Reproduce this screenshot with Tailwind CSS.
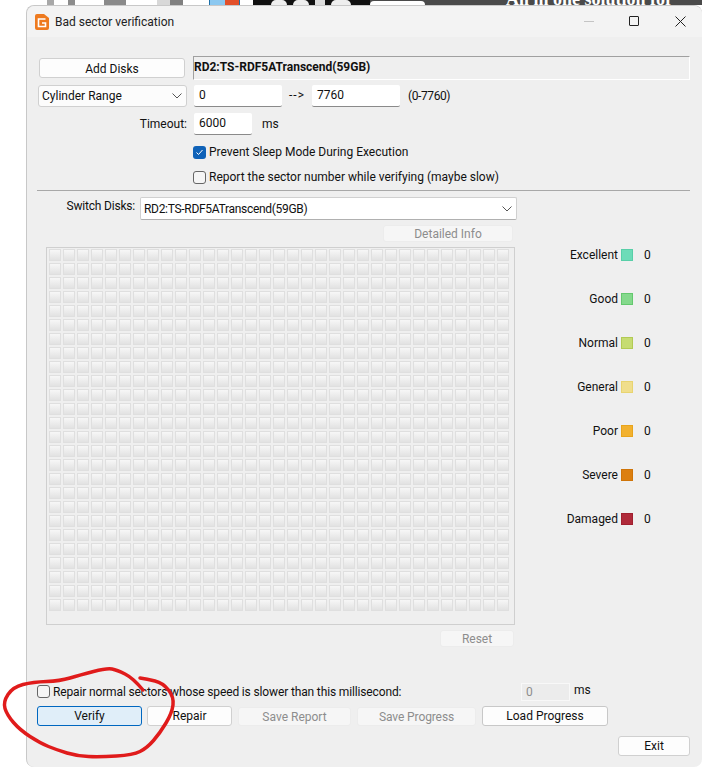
<!DOCTYPE html>
<html lang="en">
<head>
    <meta charset="UTF-8">
    <title>Bad sector verification</title>
    <script src="https://cdn.jsdelivr.net/npm/@tailwindcss/browser@4"></script>
</head>
<body class="bg-white">
<div class="relative w-[702px] h-[767px] overflow-hidden font-['Roboto',sans-serif] text-[12px] text-[#111]">

    <!-- desktop strip behind the window -->
    <div class="absolute left-0 top-0 w-[702px] h-[8px] overflow-hidden flex items-start">
        <div class="ml-[47px] w-[7px] h-[5px] bg-[#a8a8a8]"></div>
        <div class="ml-[14px] w-[7px] h-[5px] bg-[#8c8c8c]"></div>
        <div class="ml-[29px] w-[22px] h-[5px] bg-[#8a8a8a]"></div>
        <div class="ml-[31px] w-[13px] h-[5px] bg-[#d8d8d8]"></div>
        <div class="w-[13px] h-[5px] bg-[#808080]"></div>
        <div class="ml-[26px] w-[31px] h-[5px] bg-[#8cc8f0] border-x border-[#1d6fa8] flex justify-end"><div class="w-[14px] h-[5px] bg-[#e2502a]"></div></div>
        <div class="ml-[13px] w-[117px] h-[5px] bg-[#111] flex gap-[6px] pl-[18px]">
            <div class="w-[16px] h-[5px] bg-[#eee] rounded-t-full"></div>
            <div class="w-[16px] h-[5px] bg-[#eee] rounded-t-full"></div>
            <div class="w-[10px] h-[5px] bg-[#ddd]"></div>
            <div class="w-[20px] h-[5px] bg-[#eee] rounded-t-full"></div>
        </div>
        <div class="w-[332px] h-[5px] bg-[#4a4a4a] relative overflow-hidden">
            <div class="absolute left-[0px] top-[1px] w-[55px] h-[4px] bg-white rounded-t-full"></div>
            <span class="absolute left-[136px] top-[-10px] font-['Liberation_Serif',serif] font-bold text-[18px] leading-[18px] text-white whitespace-nowrap">All in one solution for</span>
        </div>
    </div>

    <!-- window -->
    <div class="absolute left-[26px] top-[5px] w-[676px] h-[762px] bg-[#efefef] rounded-[8px] border-t border-l border-[#c8c8c8]">
        <!-- title bar -->
        <div class="h-[31px] bg-[#f3f3f3] flex items-center rounded-t-[8px]">
            <svg class="ml-[8px] mt-[1px]" width="14" height="16" viewBox="0 0 14 16">
                <path d="M2 0h7l5 4v10a2 2 0 0 1-2 2H2a2 2 0 0 1-2-2V2a2 2 0 0 1 2-2z" fill="#ee7a1f"/>
                <path d="M10.500 5H3.500v7.500h7V9H7" fill="none" stroke="#fff" stroke-width="1.600"/>
            </svg>
            <span class="ml-[6px] text-[#222]">Bad sector verification</span>
            <div class="absolute left-[557px] top-[15px] w-[10px] h-[1px] bg-[#c4c4c4]"></div>
            <div class="absolute left-[602px] top-[10px] w-[10px] h-[10px] border border-[#222] rounded-[1px]"></div>
            <svg class="absolute left-[648px] top-[10px]" width="11" height="11" viewBox="0 0 11 11"><path d="M.5.500l10 10M10.500.500l-10 10" stroke="#222" fill="none"/></svg>
        </div>

        <!-- top form -->
        <div class="pl-[11px]">
            <div class="flex mt-[19px] h-[25px] items-start">
                <button class="ml-[1px] w-[146px] h-[20px] mt-[2px] pt-[1px] bg-[#fdfdfd] border border-[#d0d0d0] rounded-[3px]">Add Disks</button>
                <div class="ml-[8px] w-[497px] h-[24px] border border-[#a0a0a0] border-r-white border-b-white font-bold leading-[20px] text-[#111]">RD2:TS-RDF5ATranscend(59GB)</div>
            </div>
            <div class="flex items-center h-[22px] mt-[4px]">
                <div class="w-[149px] h-[22px] bg-[#fcfcfc] border border-[#d0d0d0] rounded-[3px] flex items-center pl-[3px] justify-between pr-[3px]">
                    <span>Cylinder Range</span>
                    <svg width="12" height="8" viewBox="0 0 12 8"><path d="M1.500 1.500l4.500 4.500 4.500-4.500" fill="none" stroke="#555"/></svg>
                </div>
                <div class="ml-[7px] w-[88px] h-[22px] bg-white border-b border-[#8a8a8a] rounded-[2px] pl-[5px] leading-[21px]">0</div>
                <span class="ml-[7px] w-[23px] tracking-[1px] mt-[-2px]">--&gt;</span>
                <div class="w-[88px] h-[22px] bg-white border-b border-[#8a8a8a] rounded-[2px] pl-[5px] leading-[21px]">7760</div>
                <span class="ml-[8px] tracking-[-0.4px]">(0-7760)</span>
            </div>
            <div class="flex items-center h-[22px] mt-[6px]">
                <span class="w-[149px] text-right">Timeout:</span>
                <div class="ml-[7px] w-[58px] h-[22px] bg-white border-b border-[#8a8a8a] rounded-[2px] pl-[5px] leading-[21px]">6000</div>
                <span class="ml-[10px]">ms</span>
            </div>
            <label class="flex items-center h-[14px] mt-[10px] ml-[155px]">
                <span class="w-[13px] h-[13px] rounded-[3px] bg-[#0f62b8] flex items-center justify-center">
                    <svg width="9" height="9" viewBox="0 0 9 9"><path d="M1.500 4.500l2 2 4-4.500" fill="none" stroke="#fff"/></svg>
                </span>
                <span class="ml-[3px]">Prevent Sleep Mode During Execution</span>
            </label>
            <label class="flex items-center h-[14px] mt-[11px] ml-[155px]">
                <span class="w-[13px] h-[13px] rounded-[3px] border border-[#666] bg-[#f5f5f5]"></span>
                <span class="ml-[3px]">Report the sector number while verifying (maybe slow)</span>
            </label>
            <div class="h-[1px] w-[653px] ml-[-1px] bg-[#a8a8a8] mt-[6px]"></div>

            <div class="flex items-start mt-[6px]">
                <span class="w-[97px] text-right leading-[16px] mt-[1px] tracking-[-0.2px]">Switch Disks:</span>
                <div class="ml-[5px] w-[377px] h-[23px] bg-white border border-[#d0d0d0] border-b-[#b0b0b0] rounded-[2px] flex items-center justify-between pl-[3px] pr-[3px]">
                    <span class="tracking-[-0.3px]">RD2:TS-RDF5ATranscend(59GB)</span>
                    <svg width="12" height="8" viewBox="0 0 12 8"><path d="M1.500 1.500l4.500 4.500 4.500-4.500" fill="none" stroke="#555"/></svg>
                </div>
            </div>
            <div class="ml-[345px] mt-[5px] w-[130px] h-[17px] bg-[#f6f6f6] border border-[#ececec] rounded-[3px] text-center leading-[16px] text-[#8d8d8d]">Detailed Info</div>
        </div>

        <!-- sector map and legend -->
        <div class="flex items-start mt-[5px]">
            <div class="ml-[19px]">
                <div id="sectors" class="w-[469px] h-[378px] border border-[#cfcfcf] pl-[2px] pt-[1px] grid grid-cols-[repeat(33,12px)] grid-rows-[repeat(26,12px)] gap-[2px]"></div>
                <div class="ml-[394px] mt-[5px] w-[74px] h-[17px] bg-[#f6f6f6] border border-[#ececec] rounded-[3px] text-center leading-[16px] text-[#8d8d8d]">Reset</div>
            </div>
            <div class="ml-[44px] w-[100px] mt-[2px]">
                <div class="flex items-center h-[12px] justify-end"><span>Excellent</span><i class="ml-[3px] w-[12px] h-[12px] bg-[#6ddcb8] border border-[#58cfa8]"></i><span class="ml-[11px] w-[10px] mr-[5px]">0</span></div>
                <div class="flex items-center h-[12px] justify-end mt-[32px]"><span>Good</span><i class="ml-[3px] w-[12px] h-[12px] bg-[#84d98c] border border-[#64c86e]"></i><span class="ml-[11px] w-[10px] mr-[5px]">0</span></div>
                <div class="flex items-center h-[12px] justify-end mt-[32px]"><span>Normal</span><i class="ml-[3px] w-[12px] h-[12px] bg-[#c6dc72] border border-[#b2ca54]"></i><span class="ml-[11px] w-[10px] mr-[5px]">0</span></div>
                <div class="flex items-center h-[12px] justify-end mt-[32px]"><span>General</span><i class="ml-[3px] w-[12px] h-[12px] bg-[#f0de8c] border border-[#e8d470]"></i><span class="ml-[11px] w-[10px] mr-[5px]">0</span></div>
                <div class="flex items-center h-[12px] justify-end mt-[32px]"><span>Poor</span><i class="ml-[3px] w-[12px] h-[12px] bg-[#f2b12f] border border-[#e8a41c]"></i><span class="ml-[11px] w-[10px] mr-[5px]">0</span></div>
                <div class="flex items-center h-[12px] justify-end mt-[32px]"><span>Severe</span><i class="ml-[3px] w-[12px] h-[12px] bg-[#dc7f10] border border-[#cf7408]"></i><span class="ml-[11px] w-[10px] mr-[5px]">0</span></div>
                <div class="flex items-center h-[12px] justify-end mt-[32px]"><span>Damaged</span><i class="ml-[3px] w-[12px] h-[12px] bg-[#b02a3a] border border-[#a0202f]"></i><span class="ml-[11px] w-[10px] mr-[5px]">0</span></div>
            </div>
        </div>

        <!-- bottom controls -->
        <div class="flex items-center h-[19px] mt-[35px] pl-[10px]">
            <span class="w-[13px] h-[13px] rounded-[3px] border border-[#666] bg-[#f5f5f5]"></span>
            <span class="ml-[3px] tracking-[-0.14px]">Repair normal sectors whose speed is slower than this millisecond:</span>
            <div class="absolute left-[494px] top-[677px] w-[49px] h-[18px] bg-[#ececec] border border-[#f8f8f8] text-[#8d8d8d] pl-[4px] leading-[16px]">0</div>
            <span class="absolute left-[547px] top-[676px] leading-[16px]">ms</span>
        </div>
        <div class="flex items-center mt-[5px] pl-[10px]">
            <button class="w-[105px] h-[20px] bg-[#e0eef9] border border-[#0067c0] rounded-[3px]">Verify</button>
            <button class="ml-[5px] w-[85px] h-[20px] bg-[#fdfdfd] border border-[#d0d0d0] rounded-[3px]">Repair</button>
            <button class="ml-[6px] w-[113px] h-[19px] bg-[#f6f6f6] border border-[#ececec] rounded-[3px] text-[#8d8d8d]">Save Report</button>
            <button class="ml-[6px] w-[119px] h-[19px] bg-[#f6f6f6] border border-[#ececec] rounded-[3px] text-[#8d8d8d] tracking-[-0.1px]">Save Progress</button>
            <button class="ml-[6px] w-[126px] h-[20px] bg-[#fdfdfd] border border-[#c8c8c8] rounded-[3px]">Load Progress</button>
        </div>
        <button class="block ml-[591px] mt-[10px] w-[72px] h-[20px] bg-[#fdfdfd] border border-[#d0d0d0] rounded-[3px]">Exit</button>
    </div>

    <!-- red pen annotation on top of the screenshot -->
    <svg class="absolute left-0 top-0 pointer-events-none" width="702" height="767" viewBox="0 0 702 767">
        <path id="pen" fill="none" stroke="#e01b1b" stroke-width="3.500" stroke-linecap="round" stroke-linejoin="round"/>
    </svg>
</div>
<script>
    // fill the sector map, 33 x 26 cells
    var sectors = document.querySelector("#sectors");
    for (let i = 0; i < 33 * 26; i++) {
        let cell = document.createElement("div");
        cell.setAttribute("class", "bg-gradient-to-b from-[#f7f7f7] to-[#e2e2e2] border border-[#dfdfdf]");
        sectors.appendChild(cell);
    }

    // smooth the hand drawn circle through midpoints
    var points = [[143,690],[133,678],[117,670],[107,668],[80,675],[60,681],[33,682],[13,687],[3,702],[7,715],[20,730],[40,743],[57,750],[77,756],[100,757],[133,755],[147,748],[160,733],[172,713],[174,697],[163,683],[147,679],[133,677]];
    var d = "M" + points[0].join(" ");
    for (let i = 1; i < points.length - 1; i++) {
        let mx = (points[i][0] + points[i + 1][0]) / 2;
        let my = (points[i][1] + points[i + 1][1]) / 2;
        d += " Q" + points[i].join(" ") + " " + mx + " " + my;
    }
    document.querySelector("#pen").setAttribute("d", d);
</script>
</body>
</html>
